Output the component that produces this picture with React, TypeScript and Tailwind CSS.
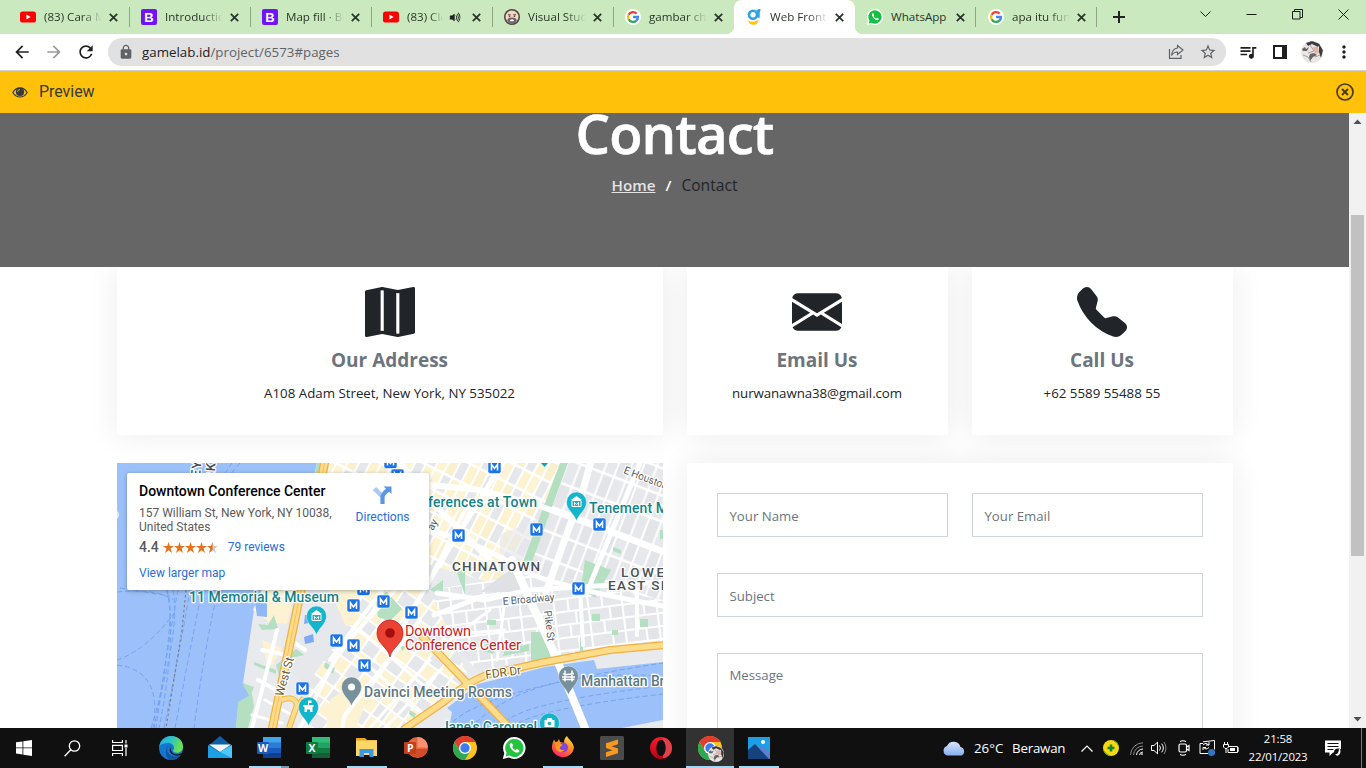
import React from "react";
import { BsMapFill, BsEnvelopeFill, BsTelephoneFill, BsFillVolumeUpFill } from "react-icons/bs";
import { MdArrowBack, MdArrowForward, MdRefresh, MdLock, MdStarBorder, MdQueueMusic, MdMoreVert } from "react-icons/md";

type P = { className?: string };

/* ---------- favicons ---------- */
const Youtube = () => (
  <svg className="size-4" viewBox="0 0 16 16">
    <rect x="0" y="2.5" width="16" height="11" rx="2.6" fill="#f00" />
    <path d="M6.4 5.6v4.8L10.6 8z" fill="#fff" />
  </svg>
);
const Bootstrap = () => (
  <span className="flex size-4 items-center justify-center rounded-[2px] bg-[#7013f9] font-['Liberation_Sans'] text-[13px] leading-none font-bold text-white">B</span>
);
const Google = () => (
  <svg className="size-4" viewBox="0 0 16 16">
    <circle cx="8" cy="8" r="8" fill="#fff" />
    <g fill="none" strokeWidth="2.3">
      <path d="M11.6 4.6A5 5 0 0 0 3.6 5.7" stroke="#ea4335" />
      <path d="M3.6 5.7a5 5 0 0 0 0 4.6" stroke="#fbbc05" />
      <path d="M3.6 10.3a5 5 0 0 0 7.7 1.4" stroke="#34a853" />
      <path d="M11.3 11.7A4.9 4.9 0 0 0 13 8H8" stroke="#4285f4" />
    </g>
  </svg>
);
const Face = () => (
  <svg className="size-4" viewBox="0 0 16 16">
    <circle cx="8" cy="8" r="8" fill="#4a4445" />
    <circle cx="8" cy="8" r="6.5" fill="#f8d5bf" />
    <path d="M3.2 11q.8-2.500 4.800-2.500t4.800 2.500q-1.300 3.500-4.800 3.500T3.200 11" fill="#6a6262" />
    <path d="M4 5.800h2.800M9.200 5.800H12" stroke="#4a4445" strokeWidth="1" />
    <circle cx="5.600" cy="7.200" r=".8" fill="#333" />
    <circle cx="10.400" cy="7.200" r=".8" fill="#333" />
    <path d="M6 11q2-1.500 4 0v1.300H6z" fill="#fff" />
  </svg>
);
const Gamelab = () => (
  <svg className="size-4" viewBox="0 0 16 16">
    <circle cx="7" cy="5.800" r="4" fill="none" stroke="#2ba3e6" strokeWidth="2.600" />
    <path d="M10.800 2.600L13.500.6l-.8 3.200v5" fill="none" stroke="#2ba3e6" strokeWidth="2" />
    <path d="M2.200 11.500q5 3 10.300-.8-.3 5-5.300 5-4.300 0-5-4.200z" fill="#ffc60b" />
  </svg>
);
const WhatsTab = () => (
  <svg className="size-4" viewBox="0 0 16 16">
    <path d="M8 0a8 8 0 1 1-3.800 15L0 16l1-4A8 8 0 0 1 8 0z" fill="#fff" />
    <path d="M8 1.300a6.700 6.700 0 1 1-3.600 12.400L1.700 14.400l.8-2.700A6.700 6.700 0 0 1 8 1.300z" fill="#12c143" />
    <path d="M5.700 4.300c-1.300.9-1 2.600.9 4.700s4 2.900 5 1.600c.4-.6.300-.9-.1-1.100l-1.400-.7c-.5-.1-.7.8-1.100.8C8 9.200 6.900 8 6.700 7.200c0-.4.6-.6.5-1l-.6-1.500c-.2-.5-.5-.6-.9-.4z" fill="#fff" />
  </svg>
);

const tabs = [
  { icon: <Youtube />, title: "(83) Cara Membuat" },
  { icon: <Bootstrap />, title: "Introduction" },
  { icon: <Bootstrap />, title: "Map fill · Bootstrap" },
  { icon: <Youtube />, title: "(83) Clean", audio: true },
  { icon: <Face />, title: "Visual Studio" },
  { icon: <Google />, title: "gambar chrome" },
  { icon: <Gamelab />, title: "Web Frontend", active: true },
  { icon: <WhatsTab />, title: "WhatsApp", full: true },
  { icon: <Google />, title: "apa itu fungsi" },
];

function TabStrip() {
  return (
    <div className="flex h-[34px] bg-[#cbe9bf] pl-2 font-['Open_Sans',sans-serif] text-[11.600px] text-[#2c352b]">
      {tabs.map((t, i) => (
        <div
          key={i}
          className={
            "relative flex h-[34px] w-[121px] shrink-0 items-center pl-3 " +
            (t.active ? "z-10 rounded-t-lg bg-white" : "")
          }
        >
          <span className="flex size-4 shrink-0">{t.icon}</span>
          <span
            className={
              "ml-2 block shrink-0 overflow-hidden whitespace-nowrap " +
              (t.audio ? "w-[36px] " : "w-[58px] ") +
              (t.full ? "" : "[mask-image:linear-gradient(to_right,#000_65%,transparent)]")
            }
          >
            {t.title}
          </span>
          {t.audio && <BsFillVolumeUpFill className="ml-[6px] size-[13px] shrink-0 text-[#1f251e]" />}
          <svg className={"size-[9px] shrink-0 " + (t.audio ? "ml-[10px]" : "ml-[7px]")} viewBox="0 0 9 9" stroke="#2c352b" strokeWidth="1.800">
            <path d="M.8.8l7.400 7.400M8.200.8L.8 8.200" />
          </svg>
          {i !== 5 && !t.active && <span className={"absolute top-[7px] h-5 w-px bg-[#8fa387] " + (i > 6 ? "right-0" : "-right-px")} />}
          {t.active && (
            <>
              <span className="absolute -left-2 bottom-0 size-2 bg-[radial-gradient(circle_at_0_0,transparent_8px,#fff_8.500px)]" />
              <span className="absolute -right-2 bottom-0 size-2 bg-[radial-gradient(circle_at_100%_0,transparent_8px,#fff_8.500px)]" />
            </>
          )}
        </div>
      ))}
      <svg className="ml-[15px] mt-[10px] size-[14px]" viewBox="0 0 14 14" stroke="#222" strokeWidth="2"><path d="M7 1v12M1 7h12" /></svg>
      <div className="ml-auto flex">
        {["M0.500 2.500L5.500 7.500L10.500 2.500", "M0.500 5.500H10.500", "", "M.5 .5l10 10M10.500.5l-10 10"].map((d, i) => (
          <div key={i} className="flex h-7 w-[46px] items-center justify-center">
            <svg className="size-[11px]" viewBox="0 0 11 11" fill="none" stroke="#1b1f1a">
              {i === 2 ? <path d="M.5 2.500h7.500v7.500H.5zM2.500 2.500V.5h8v8H8" /> : <path d={d} />}
            </svg>
          </div>
        ))}
      </div>
    </div>
  );
}

const Avatar = ({ className }: P) => (
  <svg className={className} viewBox="0 0 22 22">
    <defs><clipPath id="av"><circle cx="11" cy="11" r="11" /></clipPath></defs>
    <g clipPath="url(#av)">
      <rect width="22" height="22" fill="#e9e6e6" />
      <path d="M5 2l6-2 8 3-2 3-6-3-4 2zM18 3l4 6-2 8-2-6z" fill="#413b3b" />
      <path d="M1 8l3-2 1 2 3-2-2 4-4 0zM9 13l4-1 3 2-4 2-3 4-1-4z" fill="#6b6262" />
      <path d="M12 6l5 0 1 6-4 1z" fill="#e3b3aa" />
      <path d="M2 14l5 2 3 5M14 16l5-2M9 4l4 6-6 2" stroke="#a49d9d" fill="none" />
    </g>
  </svg>
);

function Toolbar() {
  return (
    <div className="flex h-[37px] items-center border-b border-[#cfcfcf] bg-white pl-3">
      <MdArrowBack className="size-5 text-[#1f1f1f]" />
      <MdArrowForward className="ml-3 size-5 text-[#9b9b9b]" />
      <MdRefresh className="ml-3 size-5 text-[#1f1f1f]" />
      <div className="ml-3 flex h-7 w-[1118px] items-center rounded-full bg-[#e1e1e1] pl-[10px] pr-[9px] font-['Open_Sans',sans-serif] text-[13.300px] text-[#5f6368]">
        <MdLock className="size-4 text-[#5f6368]" />
        <span className="relative top-px ml-2 tracking-[0.020px]"><span className="text-[#202124]">gamelab.id</span>/project/6573#pages</span>
        <svg className="ml-auto size-4" viewBox="0 0 16 16" fill="none" stroke="#5f6368" strokeWidth="1.200">
          <path d="M1.500 5v9.400h11.500V11" />
          <path d="M9.500 1.500l5.500 4.500-5.500 4.500V8Q5.500 8 3.500 11.500 4 4.800 9.500 4z" />
        </svg>
        <MdStarBorder className="ml-[15px] size-[18px]" />
      </div>
      <MdQueueMusic className="ml-3 size-5 text-[#1f1f1f]" />
      <svg className="ml-[15px] size-[14px]" viewBox="0 0 14 14"><path d="M1 1h12v12H1z" fill="none" stroke="#1f1f24" strokeWidth="2" /><path d="M9 0h5v14H9z" fill="#1f1f24" /></svg>
      <Avatar className="ml-[14px] size-[22px]" />
      <MdMoreVert className="ml-[11px] size-5 text-[#1f1f1f]" />
    </div>
  );
}

/* ---------- map ---------- */
const metro = [[494.500, 467], [390.500, 462], [397.500, 475.500], [458.500, 535.500], [536.500, 529.500], [599.500, 524.500], [578.500, 588.500], [363.500, 589], [353.500, 605.500], [383.500, 601.500], [411.500, 612.500], [336.500, 640.500], [353.500, 645.500], [364.500, 665.500], [302.500, 688.500]];

const Pin = ({ x, y, fill, children }: { x: number; y: number; fill: string; children?: React.ReactNode }) => (
  <g transform={`translate(${x} ${y})`}>
    <path d="M0 19C-2 12-10 8-10 0a10 10 0 0 1 20 0C10 8 2 12 0 19z" fill={fill} stroke="#fff" strokeOpacity=".5" strokeWidth=".8" />
    {children}
  </g>
);
const Museum = () => (
  <g>
    <path d="M-5.500-2L0-6 5.500-2z" fill="#fff" />
    <path d="M-4.500-1.500h9v6h-9z" fill="none" stroke="#fff" />
    <path d="M-2 3.500v-3L0 2.500 2 .5v3" fill="none" stroke="#fff" />
  </g>
);

function CityMap() {
  return (
    <svg className="block h-[265px] w-[546px]" viewBox="117 463 546 265" fontFamily="Roboto, sans-serif">
      <defs>
        <pattern id="soho" width="30" height="40" patternUnits="userSpaceOnUse" patternTransform="rotate(27)">
          <rect width="30" height="40" fill="#fff" />
          <rect x="1" y="1" width="8" height="18" fill="#fef3cf" /><rect x="11" y="1" width="8" height="18" fill="#fbf0cd" /><rect x="21" y="1" width="8" height="18" fill="#e5e7eb" />
          <rect x="1" y="21.500" width="8" height="17" fill="#fdf4d6" /><rect x="11" y="21.500" width="8" height="17" fill="#e5e7eb" /><rect x="21" y="21.500" width="8" height="17" fill="#fef3cf" />
        </pattern>
        <pattern id="les" width="24" height="50" patternUnits="userSpaceOnUse" patternTransform="rotate(21)">
          <rect width="24" height="50" fill="#fff" />
          <rect x="1" y="1" width="10.500" height="23" fill="#e3e5e9" /><rect x="13.500" y="1" width="9.500" height="23" fill="#e6e8ec" />
          <rect x="1" y="26.500" width="10.500" height="22" fill="#e6e8ec" /><rect x="13.500" y="26.500" width="9.500" height="22" fill="#e2e4e8" />
        </pattern>
        <pattern id="two" width="34" height="26" patternUnits="userSpaceOnUse" patternTransform="rotate(-7)">
          <rect width="34" height="26" fill="#fff" />
          <rect x="1" y="1" width="19" height="11" fill="#e5e7eb" /><rect x="22" y="1" width="11" height="11" fill="#e2e4e8" />
          <rect x="1" y="14" width="12" height="11" fill="#e5e7eb" /><rect x="15" y="14" width="18" height="11" fill="#e5e7eb" />
        </pattern>
        <pattern id="fidi" width="30" height="30" patternUnits="userSpaceOnUse" patternTransform="rotate(36)">
          <rect width="30" height="30" fill="#fff" />
          <rect x="1" y="1" width="12" height="13" fill="#fdf3d3" /><rect x="15" y="1" width="14" height="13" fill="#e5e7eb" />
          <rect x="1" y="16" width="12" height="13" fill="#e5e7eb" /><rect x="15" y="16" width="14" height="13" fill="#fdf3d3" />
        </pattern>
      </defs>
      <rect x="117" y="463" width="546" height="265" fill="#9cc0f9" />
      {/* ferry lines */}
      <g fill="none" stroke="#6f9ff0" strokeWidth=".9" strokeDasharray="5 3">
        <path d="M117 660q30-10 58-48M117 665q46 5 36 63M173 590q8 40-22 138M178 590q-8 40-22 138M167 590q10 50-8 138M190 590q-10 60-26 138M202 590q-12 60-27 138M218 590q-14 60-24 138M166 590q12 16-12 138M117 592q40-4 56 8M240 463l-10 12M232 463l-8 12M120 588l50 8" />
        <path d="M448 728q20-35 215-65M500 728q10-25 163-42M512 728q15-18 151-34M470 728q60-60 190-52" />
      </g>
      <path d="M186 590l-4 40-16 98" fill="none" stroke="#7b8189" strokeDasharray="2.500 2.500" strokeWidth="1.200" />
      <path d="M117 511q4 3 0 8z" fill="#e8eaed" />
      {/* Manhattan */}
      <path d="M317 463L300 530 262 590 254 610 243 683 253 688 250 698 238 708 236 728H449L452 712 447 708 478 684 545 667 594 660 597 669 663 662V463z" fill="#e8eaed" />
      <path d="M385 463H567L525 562 500 585 430 565 380 595z" fill="url(#soho)" />
      <path d="M567 463H663V600L525 575z" fill="url(#les)" />
      <path d="M500 535L545 515 525 562 500 575z" fill="#e6e8ec" opacity=".6" />
      <path d="M430 590L525 575 663 600V642L540 660 480 672 430 625z" fill="url(#two)" />
      <path d="M330 590H430L470 680 410 728H300z" fill="url(#fidi)" />
      <path d="M330 463h80v30h-90z" fill="url(#soho)" />
      <path d="M262 590h33l-8 34-18-2-16-12zM262 640l20 8-10 18-6-4z" fill="#fdf3d3" />
      <path d="M330 590h30l-6 35-22 2zM330 700l20-15 20 8-14 35h-30z" fill="#fdf3d3" />
      <path d="M313 600l20-3 14 32-40 55-18-12z" fill="#e6e8ec" />
      <path d="M512 568l-32 24 34 0 8-4z" fill="#dfe1e5" />
      {/* parks */}
      <g fill="#b4dfc0">
        <path d="M560 463h8l-36 99q-5 4-9 0zM585 560l26 10-16 28-14-10zM531 632h12l8 26-20 4zM487 620h9v5h-9zM505 650l24-6v7l-26 5zM487 640l10 4-4 10-9-3zM376 603l10-12 16 18-12 12-12-4zM238 702l14-8 2 12-6 22h-12zM258 624l10 1 6-10 4 14-16 1zM254 662l22 8v4l-22-9zM276 665l20-16 8 6-18 4-6 20zM325 662l10 6-2 6-9-7zM242 683l12 4-4 10zM457 573l8-6 0 28zM430 590l13-10 0 15zM613 547l8 3v4l-8-3zM592 614h8v7h-8zM640 619h8v8h-8zM660 530h3v9h-3zM400 645l6 2-4 4z" />
        <path d="M580 637h3v14h-3zM410 710l6 4-2 4-5-4zM612 630h6v5h-6zM317 463h7l-3 10h-6z" />
      </g>
      <path d="M305 615h8v7l-9 2zM304 637l9-3 1 8-9 2z" fill="#7eaaf5" />
      <path d="M254 597h13v20l-10-1z" fill="#8fb6f7" />
      {/* white streets */}
      <g fill="none" stroke="#fff" strokeLinecap="round">
        <path strokeWidth="7" d="M592 455Q582 500 570 525L546 592" />
        <path strokeWidth="6" d="M430 485L480 490 540 506 600 528 663 552M400 463L430 500 490 560" />
        <path strokeWidth="5" d="M430 530Q490 548 515 566T663 606M502 463L480 500 434 572M437 593L484 600 530 590 663 582M484 596L434 615M640 463L600 560 588 590" />
        <path strokeWidth="8" d="M512 560L530 600 555 655 585 728" />
        <path strokeWidth="4" d="M395 590L340 650 300 728M420 620L345 715 342 728M382 590L330 660M637 590v45M580 590l3 55M277 630l-15 60-10 38M262 650l20 4M258 680l32 18M290 640l15 10M445 555L395 640M470 500L430 580" />
        <path strokeWidth="3" d="M360 630L440 700M350 650L425 715M430 660L370 728M440 670L385 728M450 640L490 610M505 600l-8 60M445 635l60-5M265 700l25 14M252 715l30 8" />
      </g>
      {/* highways */}
      <g fill="none" strokeLinecap="butt">
        <g stroke="#f3b03f" strokeWidth="8">
          <path d="M325 460L301 590 272 730" strokeWidth="9" />
          <path d="M420 634L467 683 512 730M403 730L445 701Q470 680 490 674L540 663 610 650 665 645" />
          <path d="M281 700q14-5 16 5l-8 23M296 708l8-10" strokeWidth="6" />
        </g>
        <g stroke="#fddc8b" strokeWidth="5.500">
          <path d="M325 460L301 590 272 730" strokeWidth="6.500" />
          <path d="M420 634L467 683 512 730M403 730L445 701Q470 680 490 674L540 663 610 650 665 645" />
          <path d="M281 700q14-5 16 5l-8 23M296 708l8-10" strokeWidth="4" />
        </g>
        <path d="M325 460L301 590 272 730" stroke="#f5b84f" strokeWidth=".8" />
      </g>
      <path d="M622 728l41-8v8z" fill="#e8eaed" />
      {/* subway stations */}
      {metro.map(([x, y], i) => (
        <g key={i}>
          <rect x={x - 6.500} y={y - 6.500} width="13" height="13" rx="2" fill="#1a73e8" stroke="#fff" strokeWidth=".6" />
          <path d={`M${x - 3} ${y + 3.500}v-6l3 4 3-4v6`} fill="none" stroke="#fff" strokeWidth="1.600" />
        </g>
      ))}
      <path d="M541 463h7l-3.500 4z" fill="#12a5b5" />
      <Pin x={576.500} y={502} fill="#12b5cb"><Museum /></Pin>
      <Pin x={316.500} y={616} fill="#12b5cb"><Museum /></Pin>
      <Pin x={308.500} y={707} fill="#12b5cb"><path d="M-.5-6.500h3.500v2.500H.5v2H5v2H4v5H1.500V2.500h-3V5H-4V0h-1v-2h4.500z" fill="#fff" /></Pin>
      <Pin x={351.500} y={687} fill="#78909c"><circle r="3.600" fill="#fff" /></Pin>
      <Pin x={568.500} y={676} fill="#78909c"><path d="M-3.500-5.500v11M3.500-5.500v11M-6.500 1h13M-5.500-2.500q2 2 11 0M-6 3.500h12" fill="none" stroke="#fff" strokeWidth="1.500" /></Pin>
      <Pin x={549.500} y={723} fill="#12b5cb"><path d="M-5-3h2l1-2h4l1 2h2v7H-5z" fill="#fff" /><circle r="1.800" cy=".5" fill="#12b5cb" /></Pin>
      <g>
        <path d="M390 657c-2-10-13-13-13-24a13 13 0 0 1 26 0c0 11-11 14-13 24z" fill="#ea4335" stroke="#c5221f" strokeWidth=".8" />
        <circle cx="390" cy="633" r="4.800" fill="#a50e0e" />
      </g>
      {/* labels */}
      <g paintOrder="stroke" stroke="#fff" strokeWidth="2.400" strokeLinejoin="round" fontWeight="500">
        <g fill="#128489" fontSize="14">
          <text x="428" y="507" textLength="109">ferences at Town</text>
          <text x="589" y="512.500" textLength="94">Tenement Mus</text>
          <text x="189" y="602" textLength="150">11 Memorial &amp; Museum</text>
          <text x="441" y="732" textLength="96">Jane's Carousel</text>
        </g>
        <g fill="#5b7784" fontSize="14">
          <text x="364" y="697" textLength="148">Davinci Meeting Rooms</text>
          <text x="581" y="686" textLength="110">Manhattan Bridge</text>
        </g>
        <text x="405" y="636" fill="#c5221f" fontSize="14.500" fontWeight="400">
          <tspan textLength="66">Downtown</tspan>
          <tspan x="405" dy="14" textLength="116">Conference Center</tspan>
        </text>
        <g fill="#4b5056" fontSize="13.500">
          <text x="452" y="571" textLength="88">CHINATOWN</text>
          <text x="621" y="576.500" textLength="54">LOWER</text>
          <text x="608" y="589.500" textLength="76">EAST SIDE</text>
        </g>
        <g fill="#5a5d62" fontSize="10.500" fontWeight="400">
          <text transform="translate(503 605) rotate(-5)" textLength="52">E Broadway</text>
          <text transform="translate(544 611) rotate(83)" textLength="31">Pike St</text>
          <text transform="translate(623 473) rotate(21)" textLength="58">E Houston St</text>
          <text transform="translate(433 531) rotate(-62)">ay</text>
        </g>
        <g fill="#745a2b" fontSize="12" fontWeight="400">
          <text transform="translate(283 697) rotate(-74)" textLength="40">West St</text>
          <text transform="translate(486 679) rotate(-8)" textLength="36">FDR Dr</text>
        </g>
        <g fill="#45494f" fontSize="13">
          <text transform="translate(194 547) rotate(-85)" textLength="86">NEW JERSEY</text>
          <text transform="translate(209 537) rotate(-85)" textLength="74">NEW YORK</text>
        </g>
      </g>
    </svg>
  );
}

function PlaceCard() {
  return (
    <div className="absolute left-[10px] top-[10px] flex h-[117px] w-[302px] justify-between rounded-[2px] bg-white pl-[12.500px] pr-[19px] pt-[10px] font-['Roboto',sans-serif] text-[12px] leading-[14px] text-[#5b5b5b] shadow-[0_1px_4px_rgba(0,0,0,0.3)]">
      <div className="w-[200px]">
        <div className="text-[14px] leading-[17px] font-medium whitespace-nowrap text-black">Downtown Conference Center</div>
        <div className="mt-[6px]">157 William St, New York, NY 10038,<br />United States</div>
        <div className="mt-[6px] flex items-center">
          <span className="text-[14px] font-medium">4.4</span>
          <svg className="ml-[4px] h-[11px] w-[55px]" viewBox="0 0 55 11">
            {[0, 11, 22, 33, 44].map((x) => (
              <g key={x} transform={`translate(${x} 0)`}>
                <path d="M5.500 0l1.300 4H11L7.600 6.600 9 11 5.500 8.300 2 11l1.400-4.400L0 4h4.200z" fill={x === 44 ? "#c9c9c9" : "#e7711b"} />
                {x === 44 && <path d="M5.500 0v8.300L2 11l1.400-4.400L0 4h4.200z" fill="#e7711b" />}
              </g>
            ))}
          </svg>
          <span className="ml-[10px] text-[#2b6bdc]">79 reviews</span>
        </div>
        <div className="mt-[12px] text-[#2b6bdc]">View larger map</div>
      </div>
      <div className="flex flex-col items-center pt-[2px] text-[#2b6bdc]">
        <svg className="size-[20px]" viewBox="0 0 20 20">
          <path d="M1.500 3.500L9 11" stroke="#a9c8f3" strokeWidth="4.500" />
          <path d="M9.500 19v-7q0-3 6.500-8" fill="none" stroke="#5a96e3" strokeWidth="4.200" />
          <path d="M10.500 1.500H18.500V9z" fill="#5a96e3" />
        </svg>
        <span className="mt-[5px]">Directions</span>
      </div>
    </div>
  );
}

/* ---------- page ---------- */
const info = [
  { Icon: BsMapFill, title: "Our Address", text: "A108 Adam Street, New York, NY 535022", w: "w-[546px]" },
  { Icon: BsEnvelopeFill, title: "Email Us", text: "nurwanawna38@gmail.com", w: "w-[261px]", t: "tracking-[-0.080px]" },
  { Icon: BsTelephoneFill, title: "Call Us", text: "+62 5589 55488 55", w: "w-[261px]" },
];
const Field = ({ label, className = "h-11 pt-[12px]" }: { label: string; className?: string }) => (
  <div className={"shrink-0 border border-[#ced4da] bg-white px-3 text-[13.200px] leading-[20px] text-[#6c757d] " + className}>{label}</div>
);

function Page() {
  return (
    <div className="flex h-[615px] overflow-hidden font-['Open_Sans',sans-serif]">
      <div className="w-[1349px] shrink-0 bg-white">
        <div className="relative z-10 flex h-[154px] flex-col items-center bg-[#666]">
          <h1 className="-mt-[13px] text-[54.500px] leading-[67px] font-semibold tracking-[-0.900px] text-white [-webkit-text-stroke:0.600px_#fff]">Contact</h1>
          <div className="mt-[6px] flex text-[15.200px] leading-6 font-semibold text-white">
            <span className="text-[#e4e4e4] underline">Home</span>
            <span className="mx-[10px]">/</span>
            <span className="text-[15.600px] font-medium text-[#212529]">Contact</span>
          </div>
        </div>
        <div className="mx-auto w-[1116px]">
          <div className="flex gap-6">
            {info.map(({ Icon, title, text, w, t }) => (
              <div key={title} className={"flex h-[168px] flex-col items-center bg-white pt-5 shadow-[0_0_30px_rgba(0,0,0,0.08)] " + w}>
                <Icon className="size-[50px] text-[#212529]" />
                <h3 className="mt-[10px] text-[19px] leading-[26px] font-bold text-[#6c757d]">{title}</h3>
                <p className={"mt-[9px] text-[13.300px] leading-[22px] text-[#212529] " + (t || "")}>{text}</p>
              </div>
            ))}
          </div>
          <div className="mt-7 flex gap-6">
            <div className="relative h-[265px] w-[546px] overflow-hidden">
              <CityMap />
              <PlaceCard />
            </div>
            <div className="flex h-[300px] w-[546px] flex-col gap-9 bg-white p-[30px] shadow-[0_0_30px_rgba(0,0,0,0.08)]">
              <div className="flex gap-6">
                <Field label="Your Name" className="h-11 w-[231px] pt-[12px]" />
                <Field label="Your Email" className="h-11 w-[231px] pt-[12px]" />
              </div>
              <Field label="Subject" />
              <Field label="Message" className="h-[200px] pt-[11px]" />
            </div>
          </div>
        </div>
      </div>
      <div className="flex w-[17px] flex-col items-center bg-[#f1f1f1]">
        <svg className="h-[17px] w-[17px]" viewBox="0 0 17 17"><path d="M4.500 11h8l-4-4.500z" fill="#505050" /></svg>
        <div className="mt-[85px] h-[341px] w-[13px] bg-[#c1c1c1]" />
        <svg className="mt-auto h-[17px] w-[17px]" viewBox="0 0 17 17"><path d="M4.500 6h8l-4 4.500z" fill="#505050" /></svg>
      </div>
    </div>
  );
}

/* ---------- taskbar ---------- */
const Edge = () => (
  <svg className="size-6" viewBox="0 0 24 24">
    <defs>
      <linearGradient id="eg" x1="0" x2="1" y1="0" y2=".3"><stop offset="0" stopColor="#27a9e1" /><stop offset=".5" stopColor="#2cc3c9" /><stop offset="1" stopColor="#6be04c" /></linearGradient>
    </defs>
    <circle cx="12" cy="12" r="12" fill="#1376cf" />
    <path d="M.3 10.500C1.500 4 6.500 0 12.200 0 19.500 0 24 5.200 24 10.500c0 4-2.700 6.300-6 6.300-2.600 0-4-1-4-2 0-.7 1-1.300 1-3.200C15 9 12.200 7 9 7 5 7 1.500 8.500.3 10.500z" fill="url(#eg)" />
    <path d="M9.500 9.500c-2.500 2.500-2 9.500 5.500 11 3.500.6 6-1 7.500-2.700C20.500 21.500 16.500 24 12 24 6 23 5.500 13 9.500 9.500z" fill="#0f559f" />
    <path d="M12 10.500c-1 1.500-.5 6 4 7.800 2.500.7 5-.3 6.800-1.300.6 0 .6.700 0 1.300-4 3-11.500 1-12-4-.1-1.600.5-2.800 1.200-3.800z" fill="#101010" />
  </svg>
);
const Mail = () => (
  <svg className="size-6" viewBox="0 0 24 24">
    <path d="M0 10L12 0l12 10v12H0z" fill="#0f5ea8" />
    <path d="M1 8.500h22L12 16z" fill="#f3f5f7" />
    <path d="M0 9l12 7.500L24 9v13H0z" fill="#1f9fe3" />
    <path d="M24 9v13L8 14l4 2z" fill="#4cc8f8" />
  </svg>
);
const Office = ({ l, a, b, c, d }: { l: string; a: string; b: string; c: string; d: string }) => (
  <svg className="size-6" viewBox="0 0 24 24">
    <path d="M6 1h18v6H6z" fill={a} /><path d="M6 6.500h18v5.500H6z" fill={b} /><path d="M6 12h18v5H6z" fill={c} /><path d="M6 17h18v5H6z" fill={d} />
    <rect y="6" width="12" height="12" rx="1" fill={c} />
    <text x="6" y="15.800" fontSize="10.500" fontWeight="700" fill="#fff" textAnchor="middle" fontFamily="Open Sans, sans-serif">{l}</text>
  </svg>
);
const Explorer = () => (
  <svg className="size-6" viewBox="0 0 24 24">
    <path d="M1 2h9l2 2h10v16H1z" fill="#e9a51f" /><path d="M1 4.500h21V20H1z" fill="#fcd667" />
    <path d="M4.500 13h14v8h-14z" fill="#3f98e0" /><path d="M9 17h5.500v4H9z" fill="#101010" /><path d="M9 17h5.500v2H9z" fill="#fcd667" />
  </svg>
);
const Ppt = () => (
  <svg className="size-6" viewBox="0 0 24 24">
    <circle cx="13.500" cy="11.500" r="10.500" fill="#e8663f" /><path d="M13.500 1a10.500 10.500 0 0 1 10.500 10.500H13.500z" fill="#fa9270" /><path d="M3.500 13H24a10.500 10.500 0 0 1-20.500 0z" fill="#d24c29" />
    <rect y="6" width="12" height="12" rx="1" fill="#c43e1c" />
    <text x="6.200" y="15.700" fontSize="10.500" fontWeight="700" fill="#fff" textAnchor="middle" fontFamily="Open Sans, sans-serif">P</text>
  </svg>
);
const Chrome = () => (
  <svg className="size-6" viewBox="0 0 24 24">
    <circle cx="12" cy="12" r="12" fill="#fcc31f" />
    <path d="M1.600 6A12 12 0 0 1 22.400 6H12L7 15z" fill="#e33b2e" />
    <path d="M1.600 6A12 12 0 0 0 12 24l5.200-9-10.400 0z" fill="#2da94f" />
    <circle cx="12" cy="12" r="6" fill="#fff" /><circle cx="12" cy="12" r="4.700" fill="#3b7ded" />
  </svg>
);
const Whats = () => (
  <svg className="size-6" viewBox="0 0 24 24">
    <path d="M12 1a11 11 0 1 1-5 20.500L.8 23l1.500-6A11 11 0 0 1 12 1z" fill="#fff" />
    <path d="M12.200 3a9 9 0 1 1-4.700 16.500L3.600 20.500l1-3.700A9 9 0 0 1 12.200 3z" fill="#25c340" />
    <path d="M8.800 7c-2 1.500-1.200 4 1.200 6.700s5.500 3.800 7 2c.5-.8.400-1.400 0-1.700l-2-1c-.7-.2-1 1-1.600 1-1.200-.3-2.800-1.900-3.100-3 0-.6.900-.9.800-1.500l-.9-2c-.3-.7-.9-.8-1.400-.5z" fill="#fff" />
  </svg>
);
const Firefox = () => (
  <svg className="size-6" viewBox="0 0 24 24">
    <defs><linearGradient id="ff" x1=".8" x2=".3" y1="0" y2="1"><stop offset="0" stopColor="#ffe640" /><stop offset=".45" stopColor="#ff8a1e" /><stop offset="1" stopColor="#f8246c" /></linearGradient></defs>
    <path d="M3 3.500l1.500 2.500 2-.5L8 3l1 3 4 1c0-4 1.500-6 3-7 1 3 6.500 6 7 12A11.300 11.300 0 0 1 1 13C.6 9 2 6 3 3.500z" fill="url(#ff)" />
    <circle cx="12" cy="11.500" r="5" fill="#8545dc" />
    <path d="M4 7.500c3-1 6 0 7.500 1.500L9 11c-1 2 1.500 4 4.500 2.500-2 4-8 2.500-8.500-1z" fill="#ff9b20" />
  </svg>
);
const Sublime = () => (
  <svg className="size-6" viewBox="0 0 24 24"><rect width="24" height="24" rx="1.500" fill="#4b4b4b" /><path d="M6 7.200L18 3.500v4.800L11.500 10.300 18 12.500v4.800L6 21v-4.800l6.500-2L6 12z" fill="#f8981d" /></svg>
);
const Opera = () => (
  <svg className="size-6" viewBox="0 0 24 24">
    <defs><linearGradient id="op" x2="0" y2="1"><stop stopColor="#ff1b2d" /><stop offset="1" stopColor="#b50014" /></linearGradient></defs>
    <circle cx="12" cy="12" r="11" fill="url(#op)" /><path d="M14 2c5 0 9 5 9 10s-4 10-9 10z" fill="#e3404a" /><ellipse cx="12" cy="12" rx="4.700" ry="8.300" fill="#101010" />
  </svg>
);
const Photos = () => (
  <svg className="size-6" viewBox="0 0 24 24"><rect x="1" y="1" width="22" height="22" fill="#1d9fe6" /><path d="M12 13l4-3 7 7v6H12z" fill="#5c7fd2" /><path d="M1 14l7-6 14 15H1z" fill="#16437f" /><circle cx="16" cy="6" r="2" fill="#fff" /></svg>
);
const apps: { icon: React.ReactNode; bar?: string; bg?: string }[] = [
  { icon: <Edge /> },
  { icon: <Mail /> },
  { icon: <Office l="W" a="#41a5ee" b="#2b7cd3" c="#185abd" d="#103f91" />, bar: "w-10 border-r-8 border-[#7997a8]" },
  { icon: <Office l="X" a="#2fbd78" b="#21a366" c="#107c41" d="#185c37" /> },
  { icon: <Explorer />, bar: "w-10" },
  { icon: <Ppt /> },
  { icon: <Chrome /> },
  { icon: <Whats /> },
  { icon: <Firefox />, bar: "w-10" },
  { icon: <Sublime /> },
  { icon: <Opera /> },
  { icon: <><Chrome /><Avatar className="absolute left-[22px] top-[18px] size-4" /></>, bar: "w-12", bg: "bg-[#323232]" },
  { icon: <Photos />, bar: "w-10" },
];

function Taskbar() {
  return (
    <div className="flex h-10 bg-[#101010] text-white">
      <div className="flex w-36 items-center">
        <div className="flex w-12 justify-center"><svg className="size-4" viewBox="0 0 16 16" fill="#fff"><path d="M0 2.300l6.500-.9v6.100H0zM7.300 1.300L16 0v7.500H7.300zM0 8.300h6.500v6.100L0 13.500zM7.300 8.300H16V16l-8.700-1.300z" /></svg></div>
        <div className="flex w-12 justify-center"><svg className="size-[17px]" viewBox="0 0 17 17" fill="none" stroke="#fff" strokeWidth="1.300"><circle cx="10.500" cy="6" r="5.200" /><path d="M6.800 9.800L.6 16.200" /></svg></div>
        <div className="flex w-12 justify-center"><svg className="size-4" viewBox="0 0 16 16" fill="none" stroke="#fff" strokeWidth="1.200"><path d="M.6 0v2.500h9.800V0M.6 5.300h9.800v5.200H.6zM.6 16v-2.500h9.800V16M14 0v3.500M14 8v8" /><path d="M12.500 4.500h3v3h-3z" fill="#fff" stroke="none" /></svg></div>
      </div>
      <div className="ml-[2px] flex">
        {apps.map((a, i) => (
          <div key={i} className="flex w-[49px]">
            <div className={"relative ml-px flex h-10 w-12 shrink-0 items-center justify-center " + (a.bg || "")}>
              {a.icon}
              {a.bar && <span className={"absolute bottom-0 h-[2px] bg-[#a5d8f5] " + a.bar} />}
            </div>
          </div>
        ))}
      </div>
      <div className="ml-auto flex items-center font-['Open_Sans',sans-serif] text-[13.300px]">
        <svg className="h-4 w-6" viewBox="0 0 24 16"><defs><linearGradient id="cl" x2="0" y2="1"><stop stopColor="#d9e6ff" /><stop offset="1" stopColor="#86aeef" /></linearGradient></defs><path d="M5 15.500A5 5 0 0 1 5 6a7.200 7.200 0 0 1 13.500 1A4.500 4.500 0 0 1 19.500 15.500z" fill="url(#cl)" /></svg>
        <span className="relative top-px ml-2 w-[38px] whitespace-nowrap">26°C</span>
        <span className="relative top-px w-[69px] tracking-[-0.200px]">Berawan</span>
        <svg className="h-[7px] w-3" viewBox="0 0 12 7" fill="none" stroke="#fff" strokeWidth="1.200"><path d="M.5 6.500L6 1l5.500 5.500" /></svg>
        <svg className="ml-[10px] size-4" viewBox="0 0 16 16"><circle cx="8" cy="8" r="8" fill="#f6d90f" /><path d="M9 0a8 8 0 0 1 6.800 6.500Q13 2 9 0zM0 9q3 5 8 7a8 8 0 0 1-8-7z" fill="#4aa82e" /><path d="M8 4.500v7M4.500 8h7" stroke="#15852f" strokeWidth="2.600" /></svg>
        <svg className="ml-[11px] size-[13px]" viewBox="0 0 13 13" fill="none" stroke="#8c8c8c"><path d="M.5 13A12.500 12.500 0 0 1 13 .8M3.500 13A9.500 9.500 0 0 1 13 4" /><path d="M6.500 13A6.500 6.500 0 0 1 13 7M9.500 13A3.500 3.500 0 0 1 13 10" stroke="#fff" /><circle cx="12" cy="12" r="1" fill="#fff" /></svg>
        <svg className="ml-[8px] h-[14px] w-4" viewBox="0 0 16 14" fill="none" stroke="#fff"><path d="M.5 4.500h2.500L6.500 1.200v11.600L3 9.500H.5zM8.500 4.500q2 2.500 0 5M10.700 2.700q3.300 4.300 0 8.600" /><path d="M13 1q4 6 0 12" stroke="#888" /></svg>
        <svg className="ml-[11px] h-4 w-3" viewBox="0 0 12 16" fill="none" stroke="#fff" strokeWidth="1.200"><rect x="1" y="4" width="7.500" height="8" rx="1.500" /><path d="M8.500 7L11 5.500v5L8.500 9M2 1.500q3-1.500 6 0M2 14.500q3 1.500 6 0" /></svg>
        <svg className="ml-[9px] size-4" viewBox="0 0 16 16" fill="none" stroke="#fff"><path d="M9 13.500H1V3.500h3M4 1.800L15.500.5v9M4 4.500q3-2.500 6 .5M10 2v3H7M10 7.500q-3 3-6-.5M4 10V7.500h3" /><circle cx="12.500" cy="12.500" r="3.500" fill="#2f77c4" stroke="none" /></svg>
        <svg className="ml-[8px] h-3 w-4" viewBox="0 0 16 12" fill="none" stroke="#fff"><path d="M5 4.500h9.500v6H5V7M14.500 6H16v3h-1.500M1.500 0v2M4.500 0v2M.5 2.500h5v2.500l-1.500 1.500H2L.5 5zM3 7v4" /><path d="M7 6h5v3H7z" fill="#fff" stroke="none" /></svg>
        <div className="ml-[8px] flex w-[62px] flex-col items-center text-[11.400px] leading-[18px] tracking-[-0.150px]"><span>21:58</span><span>22/01/2023</span></div>
        <svg className="ml-[16px] size-[17px]" viewBox="0 0 17 17"><path d="M0 .5h16v12h-8L4.500 16v-3.500H0z" fill="#fff" /><path d="M2.500 3.500h11M2.500 6.500h11M2.500 9.500h6" stroke="#101010" strokeWidth="1.200" /><circle cx="13" cy="12.500" r="4" fill="#101010" /><path d="M14 8q3 3.500 0 7-2 1.500-4-.5 4 0 4-6.500z" fill="#fff" /></svg>
        <span className="ml-[19px] mr-1 h-10 w-px bg-[#777]" />
      </div>
    </div>
  );
}

export default function App() {
  return (
    <div className="h-[768px] w-[1366px] overflow-hidden bg-white">
      <TabStrip />
      <Toolbar />
      <div className="flex h-[42px] items-center bg-[#ffc10a] pl-[12px] pr-3 font-['Roboto',sans-serif] text-[16px] text-[#3a3a3a]">
        <svg className="size-4" viewBox="0 0 16 16">
          <path d="M.8 8.500Q3.500 3.800 8 3.800t7.200 4.700Q12.500 13 8 13T.8 8.500z" fill="none" stroke="#343a40" strokeWidth="1.200" />
          <circle cx="8" cy="7.900" r="4.100" fill="#343a40" />
          <path d="M5.600 7.900A2.400 2.400 0 0 1 8 5.500" fill="none" stroke="#ffc10a" strokeWidth=".8" />
        </svg>
        <span className="ml-[11px] tracking-[-0.050px]">Preview</span>
        <svg className="ml-auto size-[18px]" viewBox="0 0 18 18" fill="none" stroke="#4a3c10">
          <circle cx="9" cy="9" r="8" strokeWidth="1.700" />
          <path d="M6 6l6 6M12 6l-6 6" strokeWidth="1.900" />
        </svg>
      </div>
      <Page />
      <Taskbar />
    </div>
  );
}
